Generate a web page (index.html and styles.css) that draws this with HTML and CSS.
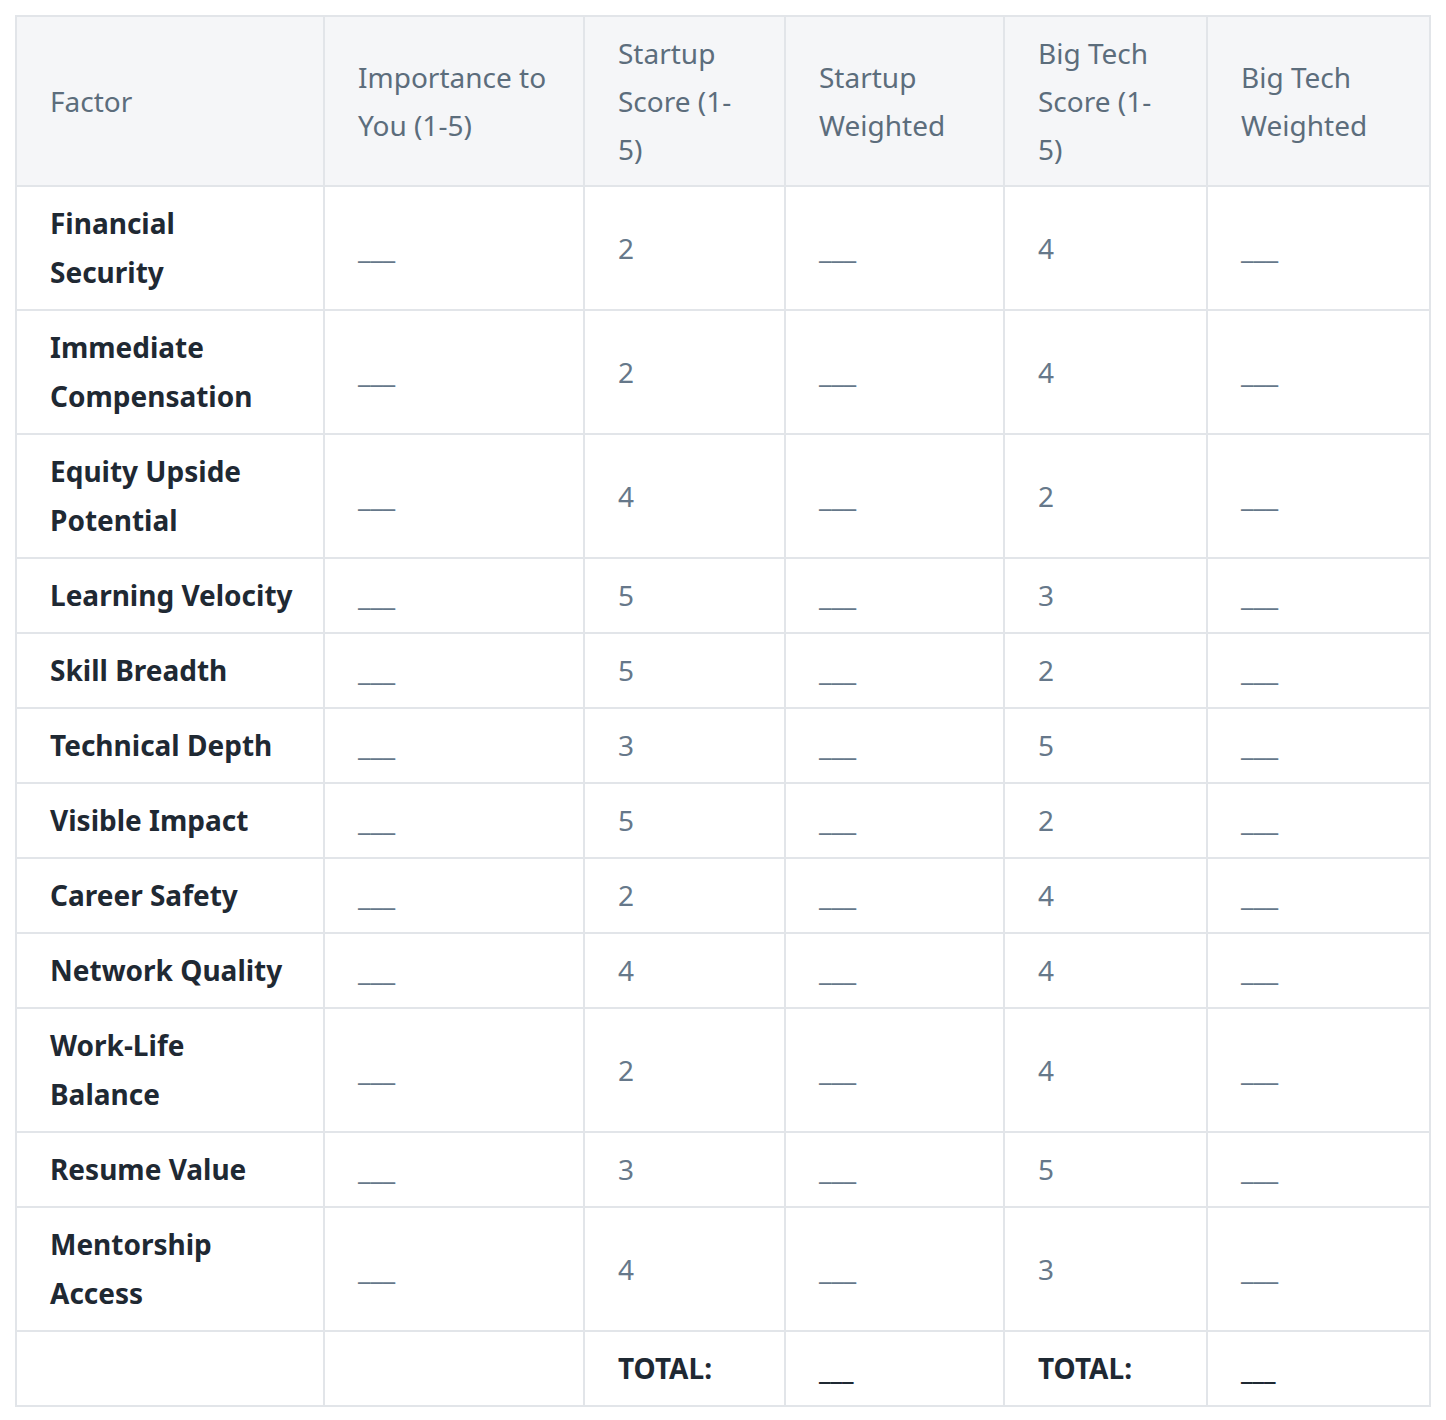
FILE: index.html
```html
<!DOCTYPE html>
<html>
<head>
<meta charset="utf-8">
<link rel="stylesheet" href="styles.css">
</head>
<body>
<table class="matrix">
  <colgroup>
    <col class="c1"><col class="c2"><col class="c3"><col class="c4"><col class="c5"><col class="c6">
  </colgroup>
  <thead>
    <tr>
      <th>Factor</th>
      <th>Importance to You (1-5)</th>
      <th>Startup Score (1-5)</th>
      <th>Startup Weighted</th>
      <th>Big Tech Score (1-5)</th>
      <th>Big Tech Weighted</th>
    </tr>
  </thead>
  <tbody>
    <tr><td class="factor">Financial Security</td><td>___</td><td>2</td><td>___</td><td>4</td><td>___</td></tr>
    <tr><td class="factor">Immediate Compensation</td><td>___</td><td>2</td><td>___</td><td>4</td><td>___</td></tr>
    <tr><td class="factor">Equity Upside Potential</td><td>___</td><td>4</td><td>___</td><td>2</td><td>___</td></tr>
    <tr><td class="factor">Learning Velocity</td><td>___</td><td>5</td><td>___</td><td>3</td><td>___</td></tr>
    <tr><td class="factor">Skill Breadth</td><td>___</td><td>5</td><td>___</td><td>2</td><td>___</td></tr>
    <tr><td class="factor">Technical Depth</td><td>___</td><td>3</td><td>___</td><td>5</td><td>___</td></tr>
    <tr><td class="factor">Visible Impact</td><td>___</td><td>5</td><td>___</td><td>2</td><td>___</td></tr>
    <tr><td class="factor">Career Safety</td><td>___</td><td>2</td><td>___</td><td>4</td><td>___</td></tr>
    <tr><td class="factor">Network Quality</td><td>___</td><td>4</td><td>___</td><td>4</td><td>___</td></tr>
    <tr><td class="factor">Work-Life Balance</td><td>___</td><td>2</td><td>___</td><td>4</td><td>___</td></tr>
    <tr><td class="factor">Resume Value</td><td>___</td><td>3</td><td>___</td><td>5</td><td>___</td></tr>
    <tr><td class="factor">Mentorship Access</td><td>___</td><td>4</td><td>___</td><td>3</td><td>___</td></tr>
    <tr><td class="factor"></td><td></td><td class="strong">TOTAL:</td><td class="strong">___</td><td class="strong">TOTAL:</td><td class="strong">___</td></tr>
  </tbody>
</table>
</body>
</html>
```

FILE: styles.css
```css
html, body {
  margin: 0;
  padding: 0;
  background: #ffffff;
}

body {
  padding: 15px 0 0 15px;
  font-family: "Noto Sans", "Open Sans", "Liberation Sans", sans-serif;
  font-size: 28px;
}

.matrix {
  border-collapse: collapse;
  table-layout: fixed;
  width: 1414px;
}

.c1 { width: 308px; }
.c2 { width: 260px; }
.c3 { width: 201px; }
.c4 { width: 219px; }
.c5 { width: 203px; }
.c6 { width: 223px; }

.matrix th,
.matrix td {
  border: 2px solid #e2e5e9;
  padding: 12px 33px;
  text-align: left;
  vertical-align: middle;
}

.matrix th {
  background: #f5f6f8;
  color: #5c6d7c;
  font-weight: 400;
  line-height: 48px;
}

.matrix td {
  color: #66788a;
  line-height: 49px;
}

.matrix td.factor {
  color: #1f2933;
  font-weight: 700;
  padding-right: 29px;
}

.matrix td.strong {
  color: #1f2933;
  font-weight: 700;
}
```
